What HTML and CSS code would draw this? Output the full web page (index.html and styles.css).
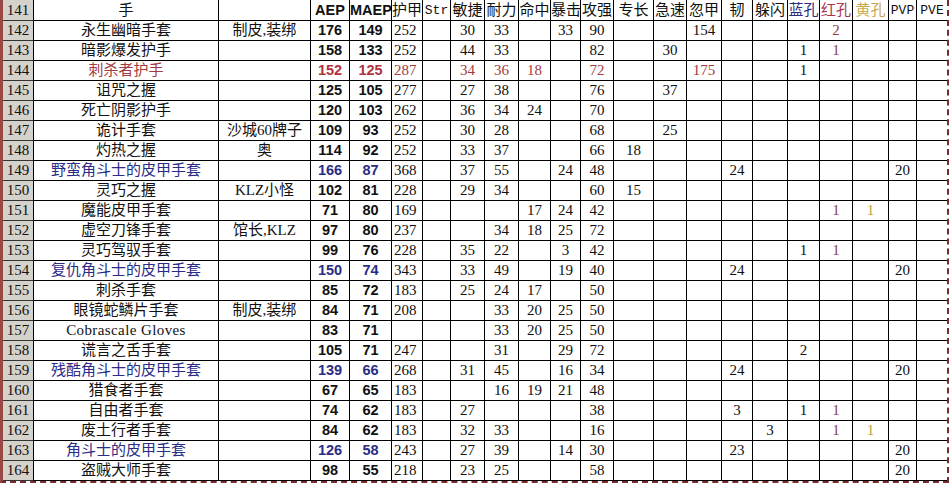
FILE: index.html
```html
<!DOCTYPE html>
<html lang="zh-CN">
<head>
<meta charset="utf-8">
<title>手套 AEP</title>
<link rel="stylesheet" href="styles.css">
</head>
<body>
<div class="sheet-wrap">
<table class="sheet">
<colgroup>
<col class="w31"><col class="w185"><col class="w92"><col class="w39"><col class="w42"><col class="w31"><col class="w28"><col class="w34"><col class="w34"><col class="w32"><col class="w30"><col class="w33"><col class="w40"><col class="w33"><col class="w35"><col class="w31"><col class="w35"><col class="w32"><col class="w33"><col class="w36"><col class="w28"><col class="w30">
</colgroup>
<tbody>
<tr class="head"><td>141</td><td>手</td><td></td><td>AEP</td><td>MAEP</td><td>护甲</td><td class="mono">Str</td><td>敏捷</td><td>耐力</td><td>命中</td><td>暴击</td><td>攻强</td><td>专长</td><td>急速</td><td>忽甲</td><td>韧</td><td>躲闪</td><td class="h-lan">蓝孔</td><td class="h-hong">红孔</td><td class="h-huang">黄孔</td><td class="mono">PVP</td><td class="mono">PVE</td></tr>
<tr><td>142</td><td>永生幽暗手套</td><td>制皮,装绑</td><td>176</td><td>149</td><td>252</td><td></td><td>30</td><td>33</td><td></td><td>33</td><td>90</td><td></td><td></td><td>154</td><td></td><td></td><td></td><td>2</td><td></td><td></td><td></td></tr>
<tr><td>143</td><td>暗影爆发护手</td><td></td><td>158</td><td>133</td><td>252</td><td></td><td>44</td><td>33</td><td></td><td></td><td>82</td><td></td><td>30</td><td></td><td></td><td></td><td>1</td><td>1</td><td></td><td></td><td></td></tr>
<tr class="red"><td>144</td><td>刺杀者护手</td><td></td><td>152</td><td>125</td><td>287</td><td></td><td>34</td><td>36</td><td>18</td><td></td><td>72</td><td></td><td></td><td>175</td><td></td><td></td><td>1</td><td></td><td></td><td></td><td></td></tr>
<tr><td>145</td><td>诅咒之握</td><td></td><td>125</td><td>105</td><td>277</td><td></td><td>27</td><td>38</td><td></td><td></td><td>76</td><td></td><td>37</td><td></td><td></td><td></td><td></td><td></td><td></td><td></td><td></td></tr>
<tr><td>146</td><td>死亡阴影护手</td><td></td><td>120</td><td>103</td><td>262</td><td></td><td>36</td><td>34</td><td>24</td><td></td><td>70</td><td></td><td></td><td></td><td></td><td></td><td></td><td></td><td></td><td></td><td></td></tr>
<tr><td>147</td><td>诡计手套</td><td>沙城60牌子</td><td>109</td><td>93</td><td>252</td><td></td><td>30</td><td>28</td><td></td><td></td><td>68</td><td></td><td>25</td><td></td><td></td><td></td><td></td><td></td><td></td><td></td><td></td></tr>
<tr><td>148</td><td>灼热之握</td><td>奥</td><td>114</td><td>92</td><td>252</td><td></td><td>33</td><td>37</td><td></td><td></td><td>66</td><td>18</td><td></td><td></td><td></td><td></td><td></td><td></td><td></td><td></td><td></td></tr>
<tr class="blue"><td>149</td><td>野蛮角斗士的皮甲手套</td><td></td><td>166</td><td>87</td><td>368</td><td></td><td>37</td><td>55</td><td></td><td>24</td><td>48</td><td></td><td></td><td></td><td>24</td><td></td><td></td><td></td><td></td><td>20</td><td></td></tr>
<tr><td>150</td><td>灵巧之握</td><td>KLZ小怪</td><td>102</td><td>81</td><td>228</td><td></td><td>29</td><td>34</td><td></td><td></td><td>60</td><td>15</td><td></td><td></td><td></td><td></td><td></td><td></td><td></td><td></td><td></td></tr>
<tr><td>151</td><td>魔能皮甲手套</td><td></td><td>71</td><td>80</td><td>169</td><td></td><td></td><td></td><td>17</td><td>24</td><td>42</td><td></td><td></td><td></td><td></td><td></td><td></td><td>1</td><td>1</td><td></td><td></td></tr>
<tr><td>152</td><td>虚空刀锋手套</td><td>馆长,KLZ</td><td>97</td><td>80</td><td>237</td><td></td><td></td><td>34</td><td>18</td><td>25</td><td>72</td><td></td><td></td><td></td><td></td><td></td><td></td><td></td><td></td><td></td><td></td></tr>
<tr><td>153</td><td>灵巧驾驭手套</td><td></td><td>99</td><td>76</td><td>228</td><td></td><td>35</td><td>22</td><td></td><td>3</td><td>42</td><td></td><td></td><td></td><td></td><td></td><td>1</td><td>1</td><td></td><td></td><td></td></tr>
<tr class="blue"><td>154</td><td>复仇角斗士的皮甲手套</td><td></td><td>150</td><td>74</td><td>343</td><td></td><td>33</td><td>49</td><td></td><td>19</td><td>40</td><td></td><td></td><td></td><td>24</td><td></td><td></td><td></td><td></td><td>20</td><td></td></tr>
<tr><td>155</td><td>刺杀手套</td><td></td><td>85</td><td>72</td><td>183</td><td></td><td>25</td><td>24</td><td>17</td><td></td><td>50</td><td></td><td></td><td></td><td></td><td></td><td></td><td></td><td></td><td></td><td></td></tr>
<tr><td>156</td><td>眼镜蛇鳞片手套</td><td>制皮,装绑</td><td>84</td><td>71</td><td>208</td><td></td><td></td><td>33</td><td>20</td><td>25</td><td>50</td><td></td><td></td><td></td><td></td><td></td><td></td><td></td><td></td><td></td><td></td></tr>
<tr><td>157</td><td class="spaced">Cobrascale Gloves</td><td></td><td>83</td><td>71</td><td></td><td></td><td></td><td>33</td><td>20</td><td>25</td><td>50</td><td></td><td></td><td></td><td></td><td></td><td></td><td></td><td></td><td></td><td></td></tr>
<tr><td>158</td><td>谎言之舌手套</td><td></td><td>105</td><td>71</td><td>247</td><td></td><td></td><td>31</td><td></td><td>29</td><td>72</td><td></td><td></td><td></td><td></td><td></td><td>2</td><td></td><td></td><td></td><td></td></tr>
<tr class="blue"><td>159</td><td>残酷角斗士的皮甲手套</td><td></td><td>139</td><td>66</td><td>268</td><td></td><td>31</td><td>45</td><td></td><td>16</td><td>34</td><td></td><td></td><td></td><td>24</td><td></td><td></td><td></td><td></td><td>20</td><td></td></tr>
<tr><td>160</td><td>猎食者手套</td><td></td><td>67</td><td>65</td><td>183</td><td></td><td></td><td>16</td><td>19</td><td>21</td><td>48</td><td></td><td></td><td></td><td></td><td></td><td></td><td></td><td></td><td></td><td></td></tr>
<tr><td>161</td><td>自由者手套</td><td></td><td>74</td><td>62</td><td>183</td><td></td><td>27</td><td></td><td></td><td></td><td>38</td><td></td><td></td><td></td><td>3</td><td></td><td>1</td><td>1</td><td></td><td></td><td></td></tr>
<tr><td>162</td><td>废土行者手套</td><td></td><td>84</td><td>62</td><td>183</td><td></td><td>32</td><td>33</td><td></td><td></td><td>16</td><td></td><td></td><td></td><td></td><td>3</td><td></td><td>1</td><td>1</td><td></td><td></td></tr>
<tr class="blue"><td>163</td><td>角斗士的皮甲手套</td><td></td><td>126</td><td>58</td><td>243</td><td></td><td>27</td><td>39</td><td></td><td>14</td><td>30</td><td></td><td></td><td></td><td>23</td><td></td><td></td><td></td><td></td><td>20</td><td></td></tr>
<tr><td>164</td><td>盗贼大师手套</td><td></td><td>98</td><td>55</td><td>218</td><td></td><td>23</td><td>25</td><td></td><td></td><td>58</td><td></td><td></td><td></td><td></td><td></td><td></td><td></td><td></td><td>20</td><td></td></tr>
</tbody>
</table>
</div>
</body>
</html>
```
FILE: styles.css
```css
html, body {
  margin: 0;
  padding: 0;
  background: #ffffff;
}

.sheet-wrap {
  display: inline-block;
  border-left: 3px solid #9a4844;
  border-right: 2px dashed #7c2a2a;
  border-bottom: 2px dashed #7c2a2a;
}

.sheet {
  border-collapse: separate;
  border-spacing: 0;
  table-layout: fixed;
  width: 944px;
}

.w28 { width: 28px; }
.w30 { width: 30px; }
.w31 { width: 31px; }
.w32 { width: 32px; }
.w33 { width: 33px; }
.w34 { width: 34px; }
.w35 { width: 35px; }
.w36 { width: 36px; }
.w39 { width: 39px; }
.w40 { width: 40px; }
.w42 { width: 42px; }
.w92 { width: 92px; }
.w185 { width: 185px; }

.sheet tr {
  height: 20px;
}

.sheet tr.head {
  height: 21px;
}

.sheet td {
  padding: 0;
  border-right: 1px solid #000;
  border-bottom: 1px solid #000;
  text-align: center;
  vertical-align: middle;
  white-space: nowrap;
  overflow: hidden;
  font-family: "Liberation Serif", "Noto Sans CJK SC", serif;
  font-size: 15px;
  line-height: 19px;
  color: #111;
}

.sheet td.mono {
  font-family: "Liberation Mono", monospace;
  font-size: 13px;
}

.sheet td.spaced {
  letter-spacing: 0.4px;
}

.sheet td:nth-child(1) {
  background: #d5d2cb;
  border-bottom-color: #333;
}

.sheet td:nth-child(4),
.sheet td:nth-child(5) {
  font-family: "Liberation Sans", Arial, sans-serif;
  font-weight: bold;
  font-size: 14.5px;
}

.sheet td:nth-child(6) {
  text-align: left;
  padding-left: 2px;
}

.sheet tr.head td:nth-child(6) {
  padding-left: 0;
}

.sheet td:nth-child(22) {
  border-right: none;
}

.sheet td:nth-child(19) {
  color: #8c3c4c;
}

.sheet td:nth-child(20) {
  color: #b3a63a;
}

.sheet tr.head td.h-lan {
  color: #2c2c84;
}

.sheet tr.head td.h-hong {
  color: #a8344e;
}

.sheet tr.head td.h-huang {
  color: #caa84a;
}

.sheet tr.red td {
  color: #a53a40;
}

.sheet tr.red td:nth-child(1),
.sheet tr.red td:nth-child(18) {
  color: #111;
}

.sheet tr.red td:nth-child(4),
.sheet tr.red td:nth-child(5) {
  color: #b23240;
}

.sheet tr.blue td:nth-child(2),
.sheet tr.blue td:nth-child(4),
.sheet tr.blue td:nth-child(5) {
  color: #2a2c86;
}
```
